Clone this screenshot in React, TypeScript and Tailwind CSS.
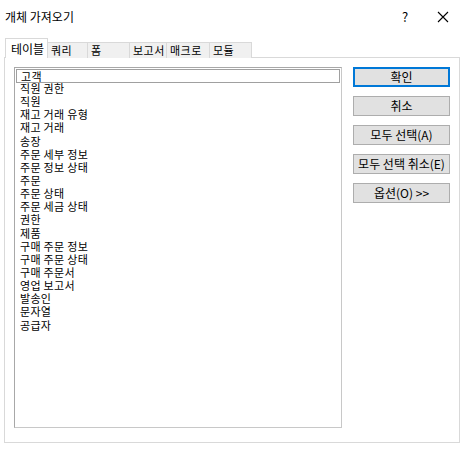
import React from 'react';

const tables = [
  '고객',
  '직원 권한',
  '직원',
  '재고 거래 유형',
  '재고 거래',
  '송장',
  '주문 세부 정보',
  '주문 정보 상태',
  '주문',
  '주문 상태',
  '주문 세금 상태',
  '권한',
  '제품',
  '구매 주문 정보',
  '구매 주문 상태',
  '구매 주문서',
  '영업 보고서',
  '발송인',
  '문자열',
  '공급자',
];

const tabs = [
  { label: '쿼리', w: 'w-[40px]' },
  { label: '폼', w: 'w-[42px]' },
  { label: '보고서', w: 'w-[37px]' },
  { label: '매크로', w: 'w-[43px]' },
  { label: '모듈', w: 'w-[42px]' },
];

const buttons = ['취소', '모두 선택(A)', '모두 선택 취소(E)', '옵션(O) >>'];

export default function App() {
  return (
    <div
      className="w-[463px] h-[452px] bg-white text-[12px] text-black overflow-hidden"
      style={{ fontFamily: '"Noto Sans CJK KR", "Noto Sans", sans-serif' }}
    >
      {/* title bar */}
      <div className="flex items-center h-[34px] pl-[5px]">
        <span className="flex-1 text-[12px]">개체 가져오기</span>
        <span className="w-[38px] text-center text-[13px]">?</span>
        <span className="w-[38px] mr-[1px] flex justify-center">
          <svg width="12" height="12" viewBox="0 0 12 12" stroke="#000" strokeWidth="1.1">
            <path d="M1 1L11 11M11 1L1 11" />
          </svg>
        </span>
      </div>

      {/* tab strip */}
      <div className="flex items-end h-[24px] pl-[5px] relative z-10 leading-none text-[11px] whitespace-nowrap">
        <div className="w-[43px] h-[20px] bg-white border border-b-0 border-[#d9d9d9] flex items-center pl-[5px] pt-[1px] text-[12px]">
          테이블
        </div>
        {tabs.map((t) => (
          <div
            key={t.label}
            className={`${t.w} h-[16px] bg-[#f0f0f0] border border-l-0 border-b-0 border-[#d9d9d9] flex items-center pl-[3px] tracking-[0.5px]`}
          >
            {t.label}
          </div>
        ))}
      </div>

      {/* panel */}
      <div className="ml-[4px] w-[456px] h-[386px] -mt-[1px] border border-[#d9d9d9] flex pt-[9px] pl-[9px]">
        <div className="w-[328px] h-[361px] border border-[#a8a8a8] border-b-[#c8c8c8] border-r-[#c8c8c8] pt-[1px] px-[1px]">
          {tables.map((name, i) => (
            <div
              key={name}
              className={`h-[13.15px] leading-[13px] pl-[4px] text-[11px] tracking-[0.3px] ${
                i === 0 ? 'border border-[#a0a0a0] pl-[3px] h-[14px] mb-[-1px]' : ''
              }`}
            >
              {name}
            </div>
          ))}
        </div>

        <div className="flex flex-col gap-[9px] ml-[11px]">
          <button className="w-[97px] h-[20px] bg-[#e1e1e1] border-2 border-[#0078d7] text-[12px] leading-none">
            확인
          </button>
          {buttons.map((b) => (
            <button
              key={b}
              className="w-[97px] h-[20px] bg-[#e1e1e1] border border-[#adadad] text-[12px] leading-none whitespace-nowrap"
            >
              {b}
            </button>
          ))}
        </div>
      </div>
    </div>
  );
}
